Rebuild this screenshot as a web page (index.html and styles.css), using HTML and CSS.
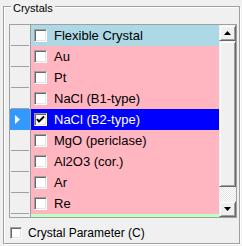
FILE: index.html
```html
<!DOCTYPE html>
<html>
<head>
<meta charset="utf-8">
<link rel="stylesheet" href="styles.css">
</head>
<body>
<div class="group">
  <span class="title">Crystals</span>
  <div class="grid">
    <div class="rows">
      <div class="row blue"><div class="rh"></div><div class="cell"><span class="cb"></span><span class="txt">Flexible Crystal</span></div></div>
      <div class="row pink"><div class="rh"></div><div class="cell"><span class="cb"></span><span class="txt">Au</span></div></div>
      <div class="row pink"><div class="rh"></div><div class="cell"><span class="cb"></span><span class="txt">Pt</span></div></div>
      <div class="row pink"><div class="rh"></div><div class="cell"><span class="cb"></span><span class="txt">NaCl (B1-type)</span></div></div>
      <div class="row sel"><div class="rh cur"><svg width="5" height="9" viewBox="0 0 5 9"><polygon points="0,0 5,4.5 0,9" fill="#fff"/></svg></div><div class="cell"><span class="cb"><svg width="9" height="9" viewBox="0 0 9 9"><polyline points="1,4 3,6.5 8,1.5" fill="none" stroke="#000" stroke-width="2"/></svg></span><span class="txt">NaCl (B2-type)</span></div></div>
      <div class="row pink"><div class="rh"></div><div class="cell"><span class="cb"></span><span class="txt">MgO (periclase)</span></div></div>
      <div class="row pink"><div class="rh"></div><div class="cell"><span class="cb"></span><span class="txt">Al2O3 (cor.)</span></div></div>
      <div class="row pink"><div class="rh"></div><div class="cell"><span class="cb"></span><span class="txt">Ar</span></div></div>
      <div class="row pink"><div class="rh"></div><div class="cell"><span class="cb"></span><span class="txt">Re</span></div></div>
      <div class="row green"><div class="rh"></div><div class="cell"><span class="cb"></span></div></div>
    </div>
    <div class="vscroll">
      <div class="sbtn"><svg width="7" height="4" viewBox="0 0 7 4"><polygon points="3.5,0 7,4 0,4" fill="#000"/></svg></div>
      <div class="thumb"></div>
      <div class="track"></div>
      <div class="sbtn"><svg width="7" height="4" viewBox="0 0 7 4"><polygon points="0,0 7,0 3.5,4" fill="#000"/></svg></div>
    </div>
  </div>
  <label class="chk"><span class="cb"></span><span class="ctxt">Crystal Parameter (C)</span></label>
</div>
</body>
</html>
```
FILE: styles.css
```css
html, body {
  margin: 0;
  padding: 0;
  background: #f0f0f0;
  width: 242px;
  height: 246px;
  overflow: hidden;
  font-family: "Liberation Sans", Arial, sans-serif;
}

.group {
  position: relative;
  margin: 6px 2px 0 3px;
  border: 1px solid #a0a0a0;
  box-shadow: inset 1px 1px 0 #fff, 1px 1px 0 #fff;
  padding: 0 0 4px 0;
}

.title {
  position: absolute;
  left: 7px;
  top: -5px;
  padding: 0 2px;
  background: #f0f0f0;
  font-size: 11px;
  line-height: 13px;
  color: #000;
}

.grid {
  display: flex;
  margin: 17px 0 0 5px;
  width: 226px;
  border: 1px solid #a0a0a0;
}

.rows {
  width: 209px;
  height: 192px;
  overflow: hidden;
  display: flex;
  flex-direction: column;
}

.row {
  display: flex;
  height: 21px;
  flex: none;
}

.rh {
  width: 20px;
  flex: none;
  border-right: 1px solid #a0a0a0;
  background: #f0f0f0 linear-gradient(#a0a0a0, #a0a0a0) no-repeat 1px 100% / 18px 1px;
  display: flex;
  align-items: center;
  box-sizing: content-box;
}

.rh.cur {
  background: #3399ff;
}

.rh.cur svg {
  margin-left: 5px;
}

.cell {
  flex: 1;
  display: flex;
  align-items: center;
  padding-left: 3px;
  font-size: 13px;
  color: #000;
  white-space: nowrap;
}

.blue .cell { background: #add8e6; }
.pink .cell { background: #ffb6c1; }
.green .cell { background: #c1ffc1; }
.sel .cell { background: #0000ff; color: #fff; }

.cb {
  width: 13px;
  height: 13px;
  box-sizing: border-box;
  flex: none;
  background: #fff;
  border: 1px solid;
  border-color: #a0a0a0 #fff #fff #a0a0a0;
  box-shadow: inset 1px 1px 0 #696969, inset -1px -1px 0 #e3e3e3;
  display: flex;
  align-items: center;
  justify-content: center;
}

.txt {
  margin-left: 7px;
}

.vscroll {
  width: 17px;
  display: flex;
  flex-direction: column;
}

.sbtn, .thumb {
  box-sizing: border-box;
  background: #f0f0f0;
  border: 1px solid;
  border-color: #f0f0f0 #696969 #696969 #f0f0f0;
  box-shadow: inset 1px 1px 0 #fff, inset -1px -1px 0 #a0a0a0;
}

.sbtn {
  height: 16px;
  display: flex;
  align-items: center;
  justify-content: center;
}

.thumb {
  height: 146px;
}

.track {
  flex: 1;
  background: repeating-conic-gradient(#ffffff 0 25%, #e4e4e4 0 50%) 0 0 / 2px 2px;
}

.chk {
  display: flex;
  align-items: center;
  margin: 8px 0 0 6px;
  height: 13px;
  font-size: 12px;
  color: #000;
}

.chk .cb {
  width: 12px;
  height: 12px;
}

.ctxt {
  margin-left: 6px;
}
```
